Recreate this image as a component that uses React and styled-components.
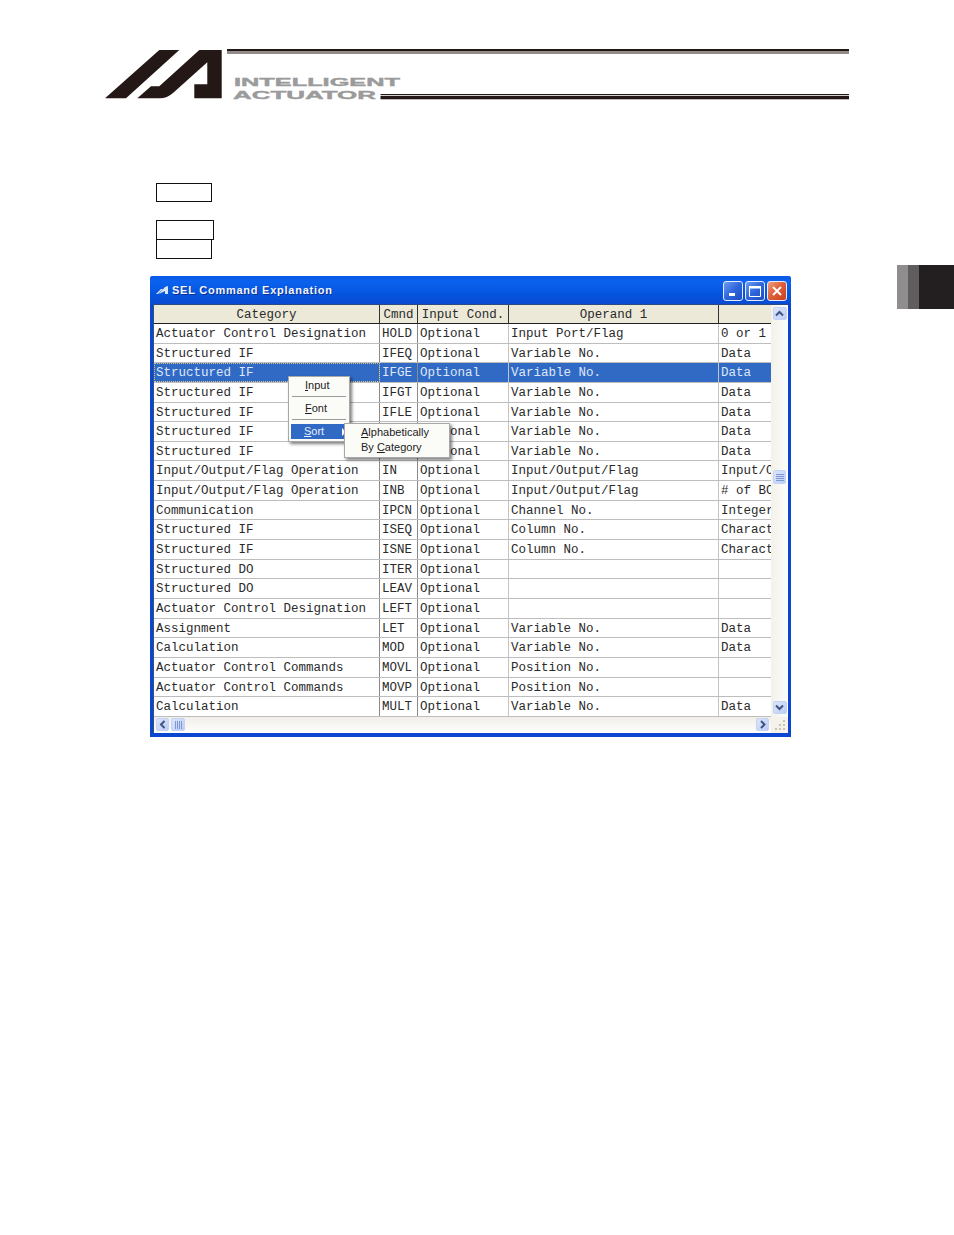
import React from "react";
import styled, { createGlobalStyle } from "styled-components";

const Global = createGlobalStyle`
  html, body { margin: 0; padding: 0; background: #fff; }
  body { font-family: "Liberation Sans", Arial, sans-serif; }
`;

const Page = styled.div`
  width: 954px;
  height: 1235px;
  overflow: hidden;
  background: #fff;
`;

const Header = styled.header`
  padding: 49px 0 0 104px;
  height: 51px;
  svg { display: block; }
`;

const BoxGroup = styled.div`
  display: flex;
  flex-direction: column;
  align-items: flex-start;
  padding: 83px 0 0 156px;
`;

const LabelBox = styled.div`
  box-sizing: border-box;
  width: ${(p) => p.$w}px;
  height: ${(p) => p.$h}px;
  margin-top: ${(p) => p.$mt || 0}px;
  border: 1px solid #111;
`;

const MainRow = styled.main`
  display: flex;
  align-items: flex-start;
  margin-top: 6px;
  padding-left: 150px;
`;

const Window = styled.section`
  box-sizing: border-box;
  width: 641px;
  height: 461px;
  margin-top: 11px;
  padding: 0 3px 4px;
  border-radius: 3px 3px 0 0;
  background: #0a46d0;
  display: flex;
  flex-direction: column;
`;

const TitleBar = styled.div`
  height: 28px;
  margin: 0 -3px;
  padding: 0 4px 0 6px;
  display: flex;
  align-items: center;
  border-radius: 3px 3px 0 0;
  background: linear-gradient(180deg, #0a5ae6 0%, #0a62ee 20%, #0553dc 70%, #0a4ad0 100%);
`;

const TitleText = styled.span`
  margin-left: 4px;
  color: #f4f7ff;
  font-size: 11px;
  font-weight: 700;
  letter-spacing: 0.75px;
  text-shadow: 1px 1px 0 #0a2f90;
  white-space: nowrap;
`;

const TitleButtons = styled.div`
  margin-left: auto;
  display: flex;
  gap: 2px;
  padding-top: 1px;
`;

const CaptionButton = styled.div`
  box-sizing: border-box;
  width: 20px;
  height: 20px;
  border: 1px solid #e4ecff;
  border-radius: 3px;
  display: flex;
  align-items: center;
  justify-content: center;
  background: ${(p) =>
    p.$close
      ? "linear-gradient(135deg, #f0a080 0%, #e0603a 45%, #c8401c 100%)"
      : "linear-gradient(135deg, #6f9cf0 0%, #2f66dc 50%, #1c4cc4 100%)"};
`;

const Client = styled.div`
  position: relative;
  flex: 1;
  display: grid;
  grid-template-columns: 617px 17px;
  grid-template-rows: 412px 16px;
  border-top: 1px solid #2a4a80;
  border-left: 1px solid #34507e;
  background: #fff;
`;

const Table = styled.div`
  overflow: hidden;
  font-family: "Liberation Mono", "Courier New", monospace;
  font-size: 12.5px;
  color: #2a2a2a;
`;

const cols = "226px 38px 91px 210px 52px";

const HeadRow = styled.div`
  display: grid;
  grid-template-columns: ${cols};
  height: 19px;
  box-sizing: border-box;
  background: #ece9d8;
  border-bottom: 1px solid #222;
`;

const HeadCell = styled.div`
  box-sizing: border-box;
  border-right: 1px solid #333;
  line-height: 20px;
  text-align: center;
  white-space: nowrap;
  overflow: hidden;
  &:last-child { border-right: none; }
`;

const Row = styled.div`
  display: grid;
  grid-template-columns: ${cols};
  height: 19.65px;
  box-sizing: border-box;
  border-bottom: 1px solid #bdbdbd;
  background: ${(p) => (p.$sel ? "#316ac5" : "#fff")};
  color: ${(p) => (p.$sel ? "#dfe7f6" : "inherit")};
`;

const Cell = styled.div`
  box-sizing: border-box;
  padding-left: 2px;
  border-right: 1px solid ${(p) => (p.$strong ? "#8a8a8a" : "#c4c4c4")};
  line-height: 21px;
  white-space: pre;
  overflow: hidden;
  outline: ${(p) => (p.$focus ? "1px dotted #d8c890" : "none")};
  outline-offset: -1px;
  &:last-child { border-right: none; }
`;

const VScroll = styled.div`
  display: flex;
  flex-direction: column;
  align-items: center;
  padding: 2px 0 3px;
  box-sizing: border-box;
  background: linear-gradient(90deg, #f3f1ea, #fdfdfb);
`;

const HScroll = styled.div`
  display: flex;
  align-items: flex-start;
  padding: 1px 2px 0;
  box-sizing: border-box;
  background: linear-gradient(180deg, #f1efe8, #fefefe);
`;

const Corner = styled.div`
  background: #f4f2ea;
  display: flex;
  align-items: flex-end;
  justify-content: flex-end;
  padding: 0 2px 2px 0;
`;

const ScrollButton = styled.div`
  box-sizing: border-box;
  width: ${(p) => p.$w}px;
  height: ${(p) => p.$h}px;
  margin-top: ${(p) => p.$mt || "0"};
  margin-left: ${(p) => p.$ml || "0"};
  border: 1px solid #c4d2f4;
  border-radius: 2px;
  background: linear-gradient(135deg, #dbe5fb, #bccdf6);
  display: flex;
  align-items: center;
  justify-content: center;
`;

const Menu = styled.div`
  position: absolute;
  left: ${(p) => p.$x}px;
  top: ${(p) => p.$y}px;
  width: ${(p) => p.$w}px;
  box-sizing: border-box;
  padding: 1px 0 2px;
  background: #fbfbf8;
  border: 1px solid #a8a8a8;
  box-shadow: 2px 2px 3px rgba(0, 0, 0, 0.5);
  font-family: "Liberation Sans", Arial, sans-serif;
  font-size: 11px;
  color: #1c1c1c;
`;

const MenuItem = styled.div`
  position: relative;
  height: 15px;
  line-height: 15px;
  margin: 0 2px;
  padding-left: ${(p) => p.$pad}px;
  white-space: nowrap;
  background: ${(p) => (p.$active ? "#316ac5" : "transparent")};
  color: ${(p) => (p.$active ? "#e8eefa" : "inherit")};
`;

const Arrow = styled.span`
  position: absolute;
  right: 1px;
  top: 4px;
  width: 0;
  height: 0;
  border-left: 4px solid #fff;
  border-top: 4px solid transparent;
  border-bottom: 4px solid transparent;
`;

const Hot = styled.span`
  text-decoration: underline;
`;

const Separator = styled.div`
  height: 1px;
  margin: 3px 3px 4px;
  background: #9a9a9a;
`;

const SideTab = styled.aside`
  display: flex;
  width: 57px;
  height: 44px;
  margin-left: 106px;
  flex-shrink: 0;
`;

const Stripe = styled.div`
  width: ${(p) => p.$w}px;
  background: ${(p) => p.$c};
`;

const rows = [
  ["Actuator Control Designation", "HOLD", "Optional", "Input Port/Flag", "0 or 1"],
  ["Structured IF", "IFEQ", "Optional", "Variable No.", "Data"],
  ["Structured IF", "IFGE", "Optional", "Variable No.", "Data"],
  ["Structured IF", "IFGT", "Optional", "Variable No.", "Data"],
  ["Structured IF", "IFLE", "Optional", "Variable No.", "Data"],
  ["Structured IF", "IFLT", "Optional", "Variable No.", "Data"],
  ["Structured IF", "IFNE", "Optional", "Variable No.", "Data"],
  ["Input/Output/Flag Operation", "IN", "Optional", "Input/Output/Flag", "Input/Output"],
  ["Input/Output/Flag Operation", "INB", "Optional", "Input/Output/Flag", "# of BCD"],
  ["Communication", "IPCN", "Optional", "Channel No.", "Integer"],
  ["Structured IF", "ISEQ", "Optional", "Column No.", "Character"],
  ["Structured IF", "ISNE", "Optional", "Column No.", "Character"],
  ["Structured DO", "ITER", "Optional", "", ""],
  ["Structured DO", "LEAV", "Optional", "", ""],
  ["Actuator Control Designation", "LEFT", "Optional", "", ""],
  ["Assignment", "LET", "Optional", "Variable No.", "Data"],
  ["Calculation", "MOD", "Optional", "Variable No.", "Data"],
  ["Actuator Control Commands", "MOVL", "Optional", "Position No.", ""],
  ["Actuator Control Commands", "MOVP", "Optional", "Position No.", ""],
  ["Calculation", "MULT", "Optional", "Variable No.", "Data"],
];

const Chevron = ({ d }) => (
  <svg width="9" height="9" viewBox="0 0 9 9">
    <path d={d} fill="none" stroke="#3f5480" strokeWidth="2" />
  </svg>
);

const LogoHeader = () => (
  <svg width="746" height="51" viewBox="104 49 746 51">
    <g fill="#231815">
      <polygon points="105,98.3 159.3,50 179.3,50 126,98.3" />
      <path d="M137.3 98.3 L151 86.3 L159.3 86.3 L199.3 50 L221.7 50 L221.7 98.3 L194.3 98.3 L194.3 84.3 L207.3 84.3 L207.3 62.3 L173.3 92.7 Q167 98.3 160 98.3 Z" />
      <rect x="227" y="49" width="622" height="2.5" />
      <rect x="227" y="52.5" width="622" height="1" />
      <rect x="380.5" y="94" width="468.5" height="1" />
      <rect x="380.5" y="95.8" width="468.5" height="3.5" />
    </g>
    <g fill="#9b9b9b" stroke="#9b9b9b" strokeWidth="0.4" fontFamily="Liberation Sans, Arial, sans-serif" fontWeight="700" fontSize="11.4">
      <text x="234" y="85.6" textLength="166" lengthAdjust="spacingAndGlyphs">INTELLIGENT</text>
      <text x="233" y="98.8" textLength="143" lengthAdjust="spacingAndGlyphs">ACTUATOR</text>
    </g>
  </svg>
);

export default function App() {
  return (
    <Page>
      <Global />
      <Header>
        <LogoHeader />
      </Header>
      <BoxGroup>
        <LabelBox $w={56} $h={19} />
        <LabelBox $w={58} $h={20} $mt={18} />
        <LabelBox $w={56} $h={20} $mt={-1} />
      </BoxGroup>
      <MainRow>
        <Window>
          <TitleBar>
            <svg width="12" height="8" viewBox="0 0 12 8">
              <path d="M0 8 L5 3 L7 3 L2 8 Z M3 8 L9 1 L12 0 L12 8 L9 8 L9 5 Z" fill="#dfe6f5" />
            </svg>
            <TitleText>SEL Command Explanation</TitleText>
            <TitleButtons>
              <CaptionButton>
                <svg width="12" height="12" viewBox="0 0 12 12">
                  <rect x="2" y="8" width="6" height="3" fill="#fff" />
                </svg>
              </CaptionButton>
              <CaptionButton>
                <svg width="14" height="14" viewBox="0 0 14 14">
                  <path d="M1.5 2.5 H12.5 V12.5 H1.5 Z" fill="none" stroke="#fff" />
                  <rect x="1" y="2" width="12" height="2.5" fill="#fff" />
                </svg>
              </CaptionButton>
              <CaptionButton $close>
                <svg width="12" height="12" viewBox="0 0 12 12">
                  <path d="M2 2 L10 10 M10 2 L2 10" stroke="#fff" strokeWidth="2" />
                </svg>
              </CaptionButton>
            </TitleButtons>
          </TitleBar>
          <Client>
            <Table>
              <HeadRow>
                <HeadCell>Category</HeadCell>
                <HeadCell>Cmnd</HeadCell>
                <HeadCell>Input Cond.</HeadCell>
                <HeadCell>Operand 1</HeadCell>
                <HeadCell />
              </HeadRow>
              {rows.map((r, i) => (
                <Row key={i} $sel={i === 2}>
                  <Cell $strong $focus={i === 2}>{r[0]}</Cell>
                  <Cell $strong>{r[1]}</Cell>
                  <Cell>{r[2]}</Cell>
                  <Cell>{r[3]}</Cell>
                  <Cell>{r[4]}</Cell>
                </Row>
              ))}
            </Table>
            <VScroll>
              <ScrollButton $w={14} $h={13}>
                <Chevron d="M1 6.5 L4.5 3 L8 6.5" />
              </ScrollButton>
              <ScrollButton $w={13} $h={14} $mt="150px">
                <svg width="8" height="9" viewBox="0 0 8 9">
                  <path d="M0 1.5 H8 M0 3.5 H8 M0 5.5 H8 M0 7.5 H8" stroke="#7f98d4" />
                </svg>
              </ScrollButton>
              <ScrollButton $w={14} $h={13} $mt="auto">
                <Chevron d="M1 2.5 L4.5 6 L8 2.5" />
              </ScrollButton>
            </VScroll>
            <HScroll>
              <ScrollButton $w={13} $h={13}>
                <Chevron d="M6.5 1 L3 4.5 L6.5 8" />
              </ScrollButton>
              <ScrollButton $w={14} $h={13} $ml="2px">
                <svg width="9" height="8" viewBox="0 0 9 8">
                  <path d="M1.5 0 V8 M3.5 0 V8 M5.5 0 V8 M7.5 0 V8" stroke="#7f98d4" />
                </svg>
              </ScrollButton>
              <ScrollButton $w={13} $h={13} $ml="auto">
                <Chevron d="M3 1 L6.5 4.5 L3 8" />
              </ScrollButton>
            </HScroll>
            <Corner>
              <svg width="11" height="11" viewBox="0 0 11 11">
                <path d="M8 0h2v2H8z M4 4h2v2H4z M8 4h2v2H8z M0 8h2v2H0z M4 8h2v2H4z M8 8h2v2H8z" fill="#c6c3b4" />
              </svg>
            </Corner>
            <Menu $x={134} $y={71} $w={62}>
              <MenuItem $pad={14}><Hot>I</Hot>nput</MenuItem>
              <Separator />
              <MenuItem $pad={14}><Hot>F</Hot>ont</MenuItem>
              <Separator />
              <MenuItem $pad={13} $active><Hot>S</Hot>ort<Arrow /></MenuItem>
            </Menu>
            <Menu $x={190} $y={118} $w={106}>
              <MenuItem $pad={14}><Hot>A</Hot>lphabetically</MenuItem>
              <MenuItem $pad={14}>By <Hot>C</Hot>ategory</MenuItem>
            </Menu>
          </Client>
        </Window>
        <SideTab>
          <Stripe $w={11} $c="#8f8d8d" />
          <Stripe $w={11} $c="#5f5d5d" />
          <Stripe $w={35} $c="#231f20" />
        </SideTab>
      </MainRow>
    </Page>
  );
}
